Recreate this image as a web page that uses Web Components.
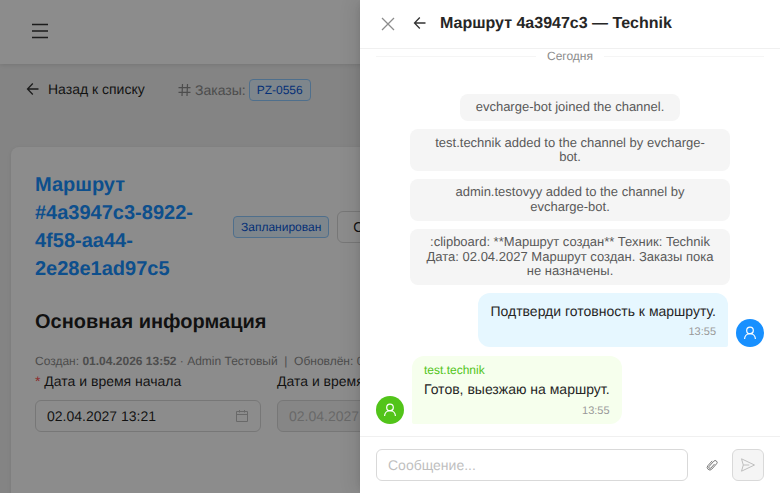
<!DOCTYPE html>
<html lang="ru">
<head>
<meta charset="utf-8">
<title>Маршрут</title>
<style>
  html, body { margin: 0; height: 100%; overflow: hidden; }
  body { font-family: "Liberation Sans", Arial, sans-serif; font-size: 14px; text-rendering: geometricPrecision; }
</style>
</head>
<body>
<route-app></route-app>
<script>
const icons = {
  menu: '<svg width="18" height="16" viewBox="0 0 18 16" fill="none" stroke="currentColor" stroke-width="1.3"><path d="M1 1.5h16M1 8h16M1 14.5h16"/></svg>',
  back: '<svg width="14" height="14" viewBox="0 0 14 14" fill="none" stroke="currentColor" stroke-width="1.3"><path d="M12.500 7H1.500M6.800 1.500 1.500 7l5.300 5.500"/></svg>',
  close: '<svg width="16" height="16" viewBox="0 0 16 16" fill="none" stroke="currentColor" stroke-width="1.3"><path d="M2 2l12 12M14 2 2 14"/></svg>',
  hash: '<svg width="13" height="14" viewBox="0 0 13 14" fill="none" stroke="currentColor" stroke-width="1.2"><path d="M.5 4.700h12M.5 9.300h12M4.500 1 4 13M9.500 1 9 13"/></svg>',
  calendar: '<svg width="14" height="14" viewBox="0 0 14 14" fill="none" stroke="currentColor" stroke-width="1"><path d="M1.500 2.500h11v10h-11zM1.500 5.500h11M4.500 1v2.500M9.500 1v2.500"/></svg>',
  user: '<svg width="14" height="14" viewBox="0 0 14 14" fill="none" stroke="currentColor" stroke-width="1.2"><circle cx="7" cy="4.400" r="3.300"/><path d="M1.600 13c0-3 2.300-5.300 5.400-5.300s5.400 2.300 5.400 5.300"/></svg>',
  clip: '<svg width="14" height="14" viewBox="0 0 14 14" fill="none" stroke="currentColor" stroke-width=".9"><path transform="rotate(42 7 7)" d="M4.400 3.800v6.400a2.600 2.600 0 0 0 5.200 0V3a1.900 1.900 0 0 0-3.800 0v7a1.200 1.200 0 0 0 2.400 0V4.500"/></svg>',
  send: '<svg width="16" height="16" viewBox="0 0 16 16" fill="none" stroke="currentColor" stroke-width="1" stroke-linejoin="round"><path d="M1.500 1.800 14.500 8 1.500 14.200 3.300 8zM3.300 8h6"/></svg>'
}

class RouteApp extends HTMLElement {
  constructor() {
    super()
    this.attachShadow({mode:'open'})
    this.shadowRoot.innerHTML = `
    <style>
      :host { display: block; position: relative; width: 100%; height: 100%; overflow: hidden; }
      .mask { position: absolute; inset: 0; background: rgba(0,0,0,.45); }
      .panel { position: absolute; top: 0; right: 0; bottom: 0; width: 420px; }
    </style>
    <route-page></route-page>
    <div class="mask"></div>
    <div class="panel"><chat-drawer></chat-drawer></div>`
  }
}

class RoutePage extends HTMLElement {
  constructor() {
    super()
    this.attachShadow({mode:'open'})
    this.shadowRoot.innerHTML = `
    <style>
      :host { display: block; height: 100%; background: #f0f0f0; color: rgba(0,0,0,.88); }
      header { height: 64px; background: #fff; box-shadow: 0 1px 4px rgba(0,0,0,.1); display: flex; align-items: center; padding: 0 0 2px 31px; box-sizing: border-box; color: #333; }
      .crumbs { display: flex; align-items: center; height: 28px; margin: 12px 0 0 26px; }
      .backlink { display: flex; align-items: center; gap: 8px; width: 152px; margin-top: -3px; }
      .backlink svg { color: #333; }
      .orders { display: flex; align-items: center; gap: 4px; color: #8c8c8c; }
      .orders svg { display: block; }
      .tag { font-size: 12px; line-height: 20px; padding: 0 7px; border: 1px solid #91caff; border-radius: 4px; background: #e6f4ff; color: #0958d9; }
      .orders .tag { margin-left: -1px; }
      .card { margin: 43px 0 0 11px; width: 760px; height: 400px; box-sizing: border-box; padding: 24px; background: #fff; border-radius: 8px; box-shadow: 0 1px 4px rgba(0,0,0,.08); }
      .top { display: flex; align-items: center; }
      h1 { margin: 0; width: 198px; font-size: 20px; line-height: 28px; font-weight: 700; color: #1890ff; }
      .top .tag { margin-right: 8px; flex: none; }
      button { font: inherit; height: 32px; padding: 0 15px; background: #fff; border: 1px solid #d9d9d9; border-radius: 6px; white-space: nowrap; color: inherit; }
      h2 { margin: 25px 0 0; font-size: 20px; line-height: 28px; font-weight: 700; }
      .meta { margin-top: 17px; font-size: 12px; line-height: 16px; color: #8c8c8c; white-space: nowrap; }
      .meta b { font-weight: 700; }
      .fields { display: flex; gap: 16px; margin-top: 1px; }
      .field { width: 226px; flex: none; }
      label { display: block; line-height: 22px; margin-bottom: 8px; white-space: nowrap; }
      label i { font-style: normal; color: #ff4d4f; }
      .input { height: 32px; box-sizing: border-box; border: 1px solid #d9d9d9; border-radius: 6px; display: flex; align-items: center; justify-content: space-between; padding: 0 11px; background: #fff; }
      .input svg { color: #bfbfbf; }
      .input.off { background: #f5f5f5; color: #bfbfbf; white-space: nowrap; overflow: hidden; }
    </style>
    <header>${icons.menu}</header>
    <div class="crumbs">
      <div class="backlink">${icons.back}<span>Назад к списку</span></div>
      <div class="orders">${icons.hash}<span>Заказы:</span><span class="tag">PZ-0556</span></div>
    </div>
    <div class="card">
      <div class="top">
        <h1>Маршрут #4a3947c3-8922-4f58-aa44-2e28e1ad97c5</h1>
        <span class="tag">Запланирован</span>
        <button>Отменить</button>
      </div>
      <h2>Основная информация</h2>
      <div class="meta">Создан: <b>01.04.2026 13:52</b> · Admin Тестовый &nbsp;|&nbsp; Обновлён: 01.04.2026</div>
      <div class="fields">
        <div class="field"><label><i>*</i> Дата и время начала</label><div class="input"><span>02.04.2027 13:21</span>${icons.calendar}</div></div>
        <div class="field"><label>Дата и время окончания</label><div class="input off"><span>02.04.2027 18:00</span></div></div>
      </div>
    </div>`
  }
}

class SystemMessage extends HTMLElement {
  constructor() {
    super()
    this.attachShadow({mode:'open'})
    this.shadowRoot.innerHTML = `
    <style>
      :host { display: block; width: fit-content; max-width: 320px; box-sizing: border-box; margin: 0 auto; padding: 6.25px 16px; background: #f5f5f5; border-radius: 8px; font-size: 13px; line-height: 14.5px; text-align: center; color: #595959; }
    </style>
    <slot></slot>`
  }
}

class ChatMessage extends HTMLElement {
  constructor() {
    super()
    this.attachShadow({mode:'open'})
    const name = this.getAttribute('name')
    this.shadowRoot.innerHTML = `
    <style>
      :host { display: flex; align-items: flex-end; gap: 8px; }
      :host([own]) { flex-direction: row-reverse; }
      .avatar { width: 28px; height: 28px; flex: none; border-radius: 50%; display: flex; align-items: center; justify-content: center; color: #fff; background: #52c41a; }
      :host([own]) .avatar { background: #1890ff; }
      .bubble { box-sizing: border-box; padding: 7px 12px 6px; background: #f6ffed; border-radius: 12px 12px 12px 2px; }
      :host([own]) .bubble { padding: 8px 12px; background: #e6f7ff; border-radius: 12px 12px 2px 12px; }
      .name { font-size: 12px; line-height: 14px; margin-bottom: 2px; color: #52c41a; }
      .text { font-size: 14px; line-height: 20px; color: #262626; }
      .time { font-size: 11px; line-height: 13px; margin-top: 6px; text-align: right; color: #999; }
      :host([own]) .time { margin-top: 5px; }
    </style>
    <div class="avatar">${icons.user}</div>
    <div class="bubble">
      ${name ? `<div class="name">${name}</div>` : ''}
      <div class="text"><slot></slot></div>
      <div class="time">${this.getAttribute('time')}</div>
    </div>`
  }
}

class ChatDrawer extends HTMLElement {
  constructor() {
    super()
    this.attachShadow({mode:'open'})
    this.shadowRoot.innerHTML = `
    <style>
      :host { display: flex; flex-direction: column; height: 100%; background: #fff; box-shadow: -6px 0 16px rgba(0,0,0,.08), -3px 0 6px -4px rgba(0,0,0,.12); }
      header { flex: none; height: 49px; box-sizing: border-box; border-bottom: 1px solid #f0f0f0; display: flex; align-items: center; padding-left: 20px; }
      .x { display: flex; color: #8c8c8c; margin-right: 17px; }
      .arrow { display: flex; color: #333; margin-right: 13px; margin-top: -2px; }
      .title { font-size: 16px; font-weight: 700; color: #262626; margin-top: -1px; }
      .list { flex: 1; min-height: 0; overflow: hidden; padding: 0 16px; display: flex; flex-direction: column; }
      .day { flex: none; display: flex; align-items: center; gap: 11px; font-size: 12px; line-height: 14px; color: #8c8c8c; margin-bottom: 31px; }
      .day::before, .day::after { content: ""; flex: 1; border-top: 1px solid #f5f5f5; }
      .msgs { display: flex; flex-direction: column; gap: 8.33px; }
      footer { flex: none; border-top: 1px solid #f0f0f0; padding: 12px 16px; display: flex; align-items: center; height: 57px; box-sizing: border-box; }
      .field { flex: 1; height: 32px; box-sizing: border-box; border: 1px solid #d9d9d9; border-radius: 6px; padding: 0 11px; font-size: 14px; line-height: 30px; color: #bfbfbf; }
      .attach { width: 32px; height: 32px; margin: 0 4px 0 8px; display: flex; align-items: center; justify-content: center; color: #737373; }
      .sendbtn { width: 32px; height: 32px; box-sizing: border-box; border: 1px solid #d9d9d9; border-radius: 6px; background: #f5f5f5; color: #bfbfbf; display: flex; align-items: center; justify-content: center; }
    </style>
    <header>
      <span class="x">${icons.close}</span>
      <span class="arrow">${icons.back}</span>
      <span class="title">Маршрут 4a3947c3 — Technik</span>
    </header>
    <div class="list">
      <div class="day">Сегодня</div>
      <div class="msgs">
        <system-message>evcharge-bot joined the channel.</system-message>
        <system-message>test.technik added to the channel by evcharge-bot.</system-message>
        <system-message>admin.testovyy added to the channel by evcharge-bot.</system-message>
        <system-message>:clipboard: **Маршрут создан** Техник: Technik Дата: 02.04.2027 Маршрут создан. Заказы пока не назначены.</system-message>
        <chat-message own time="13:55">Подтверди готовность к маршруту.</chat-message>
        <chat-message name="test.technik" time="13:55">Готов, выезжаю на маршрут.</chat-message>
      </div>
    </div>
    <footer>
      <div class="field">Сообщение...</div>
      <span class="attach">${icons.clip}</span>
      <span class="sendbtn">${icons.send}</span>
    </footer>`
  }
}

window.customElements.define('system-message', SystemMessage)
window.customElements.define('chat-message', ChatMessage)
window.customElements.define('chat-drawer', ChatDrawer)
window.customElements.define('route-page', RoutePage)
window.customElements.define('route-app', RouteApp)
</script>
</body>
</html>
